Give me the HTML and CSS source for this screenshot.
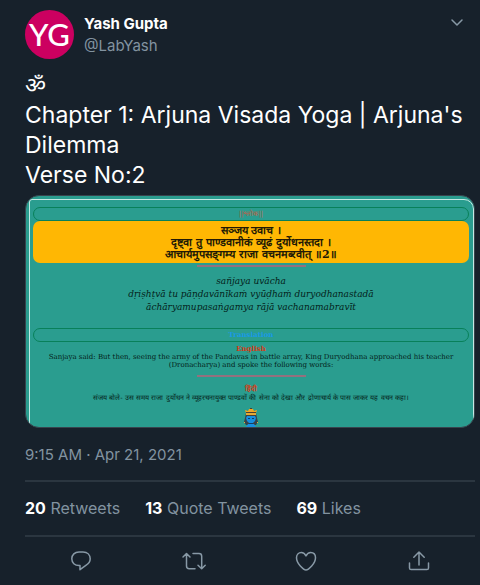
FILE: index.html
```html
<!DOCTYPE html>
<html lang="en">
<head>
<meta charset="utf-8">
<meta name="viewport" content="width=device-width, initial-scale=1">
<title>Yash Gupta (@LabYash)</title>
<link rel="stylesheet" href="styles.css">
</head>
<body>
<article class="tweet">
  <header class="author">
    <div class="avatar" aria-hidden="true">YG</div>
    <div class="names">
      <a class="name" href="#">Yash Gupta</a>
      <a class="handle" href="#">@LabYash</a>
    </div>
    <button class="icon-button more" type="button" aria-label="More">
      <svg width="14" height="10" viewBox="0 0 14 10"><path d="M2 2l5 5 5-5"/></svg>
    </button>
  </header>

  <p class="text"><span class="om" lang="sa">ॐ</span><br>Chapter 1: Arjuna Visada Yoga | Arjuna's Dilemma<br>Verse No:2</p>

  <section class="media">
    <div class="frame">
      <h2 class="pill shloka" lang="hi">||श्लोक||</h2>
      <p class="verse" lang="sa">सञ्जय उवाच ।<br>दृष्ट्&zwnj;वा तु पाण्डवानीकं व्यूढं दुर्योधनस्तदा ।<br>आचार्यमुपसङ्&zwnj;गम्य राजा वचनमब्&zwj;रवीत् ॥2॥</p>
      <hr class="rule">
      <p class="roman">sañjaya uvācha<br>dṛiṣhṭvā tu pāṇḍavānīkaṁ vyūḍhaṁ duryodhanastadā<br>āchāryamupasaṅgamya rājā vachanamabravīt</p>
      <h2 class="pill translation">Translation</h2>
      <h3 class="language">English</h3>
      <p class="english">Sanjaya said: But then, seeing the army of the Pandavas in battle array, King Duryodhana approached his teacher<br>(Dronacharya) and spoke the following words:</p>
      <hr class="rule">
      <h3 class="language" lang="hi">हिंदी</h3>
      <p class="hindi" lang="hi">संजय बोले- उस समय राजा दुर्योधन ने व्यूहरचनायुक्त पाण्डवों की सेना को देखा और द्रोणाचार्य के पास जाकर यह वचन कहा।</p>
      <svg class="deity" width="16" height="20" viewBox="0 0 16 20" aria-hidden="true">
        <path fill="#35434b" d="M3 5h10l1 5 1 4-2 3H3l-2-3 1-4z"/>
        <path fill="#168fe0" d="M4 8h8l1 2-1 3-2 2H6l-2-2-1-3zM5 16h6l2 3H3z"/>
        <path fill="#123e63" d="M5 10h2v1H5zM9 10h2v1H9zM6 15h4v1H6zM4 19h8v1H4z"/>
        <path fill="#f5a61d" d="M2 2l3 1 1-2h4l1 2 3-1-1 3H3z"/>
        <path fill="#4a4030" d="M3 4h10v1H3zM7 0h2v1H7zM3 7h10v1H3z"/>
        <path fill="#e5aa35" d="M3 5h10v2H3zM7 2h2v2H7zM1 14h1v1H1zM14 14h1v1h-1z"/>
      </svg>
    </div>
  </section>

  <time class="date" datetime="2021-04-21T09:15">9:15 AM · Apr 21, 2021</time>

  <div class="stats">
    <a href="#"><strong>20</strong> Retweets</a>
    <a href="#"><strong>13</strong> Quote Tweets</a>
    <a href="#"><strong>69</strong> Likes</a>
  </div>

  <footer class="actions">
    <button class="icon-button" type="button" aria-label="Reply">
      <svg width="24" height="24" viewBox="0 0 24 24"><path d="M10 3h4c4.500 0 7.200 3 7.200 6.800 0 3-1.600 4.900-4 6.300L11 20.700v-4.100h-1c-4.200 0-7.200-2.800-7.200-6.800S5.800 3 10 3z"/></svg>
    </button>
    <button class="icon-button" type="button" aria-label="Retweet">
      <svg width="26" height="24" viewBox="0 0 26 24"><path d="M2 8l3.500-3.500L9 8M5.500 5v12c0 1.800 1 2.700 2.700 2.700H14M12 4.500h6c1.700 0 2.700 1 2.700 2.700v12M17 16.200l3.700 3.500 3.500-3.500"/></svg>
    </button>
    <button class="icon-button" type="button" aria-label="Like">
      <svg width="24" height="24" viewBox="0 0 24 24"><path d="M12 21C9.500 21 2.500 14.500 2.500 8.800 2.500 5.500 4.600 3.500 7.300 3.500c2.600 0 4 1.900 4.700 3.400.7-1.500 2.100-3.400 4.700-3.400 2.700 0 4.800 2 4.800 5.300C21.500 14.500 14.500 21 12 21z"/></svg>
    </button>
    <button class="icon-button" type="button" aria-label="Share">
      <svg width="24" height="24" viewBox="0 0 24 24"><path d="M12 16V3M6.800 8.200L12 3l5.200 5.200M2.500 14v5c0 1 .6 1.600 1.600 1.600h15.800c1 0 1.600-.6 1.600-1.600v-5"/></svg>
    </button>
  </footer>
</article>
</body>
</html>
```
FILE: styles.css
```css
* {
  box-sizing: border-box;
}

body {
  margin: 0;
  background: #17212b;
  color: #fff;
  font-family: Inter, "Noto Sans", sans-serif;
}

a {
  color: inherit;
  text-decoration: none;
}

h2, h3, p {
  margin: 0;
}

.tweet {
  padding: 10px 5px 0 25px;
}

.author {
  display: flex;
  align-items: flex-start;
  gap: 10px;
}

.avatar {
  display: grid;
  place-items: center;
  width: 49px;
  height: 49px;
  border-radius: 50%;
  background: #cc0060;
  font: 500 31px/49px Lato, sans-serif;
}

.names {
  display: flex;
  flex: 1;
  flex-direction: column;
  padding-top: 3px;
  font-size: 15px;
  line-height: 22px;
}

.name {
  font-weight: 700;
}

.handle {
  color: #8293a0;
}

.icon-button {
  display: block;
  padding: 0;
  border: 0;
  background: none;
  color: #8899a6;
}

.icon-button svg {
  display: block;
  fill: none;
  stroke: currentColor;
  stroke-width: 1.5;
  stroke-linecap: round;
  stroke-linejoin: round;
}

.more {
  padding: 8px 11px 0 0;
}

.text {
  padding-top: 10px;
  font-size: 23px;
  line-height: 30px;
}

.om {
  font-family: "Noto Sans", sans-serif;
}

.media {
  height: 233px;
  margin-top: 5px;
  overflow: hidden;
  border: 1px solid #38444d;
  border-radius: 14px;
  background: #2a9d8f;
  color: #041d1a;
  font-family: "DejaVu Serif", serif;
  text-align: center;
}

.frame {
  height: 250px;
  margin: 3px 0 0 3px;
  padding: 7px 4px 0 3px;
  border: 1px solid #c4e9e4;
  border-radius: 3px 10px 0 0;
}

.pill {
  height: 14px;
  border: 1px solid #08805a;
  border-radius: 7px;
  font-size: 7px;
  line-height: 12px;
}

.shloka {
  color: #c45b43;
  font-weight: 400;
}

.translation {
  margin-top: 14px;
  color: #1999e6;
}

.verse {
  padding: 4px 0 2px;
  border-radius: 7px;
  background: #ffb703;
  color: #211a05;
  font-size: 11px;
  font-weight: 700;
  line-height: 12px;
}

.rule {
  width: 109px;
  height: 2px;
  margin: 2px auto 8px;
  border: 0;
  background: #94707e;
}

.roman {
  font-size: 9px;
  font-style: italic;
  line-height: 13px;
}

.language {
  color: #d63b16;
  font-size: 7px;
  line-height: 8px;
}

.translation + .language {
  margin-top: 3px;
}

.english {
  margin-bottom: 6px;
  font-size: 7px;
  line-height: 8px;
}

.hindi {
  font-size: 7px;
  line-height: 10px;
}

.deity {
  display: block;
  margin: 5px auto 0;
}

.date {
  display: block;
  padding: 17px 0 16px;
  color: #8293a0;
  font-size: 15px;
  line-height: 19px;
}

.stats {
  display: flex;
  gap: 25px;
  padding: 16px 0 17px;
  border: solid #2b3640;
  border-width: 2px 0;
  color: #8293a0;
  font-size: 16px;
  line-height: 20px;
}

.stats strong {
  color: #fff;
  font-weight: 700;
}

.actions {
  display: grid;
  grid-template-columns: repeat(4, 1fr);
  justify-items: center;
  padding-top: 12px;
}
```
